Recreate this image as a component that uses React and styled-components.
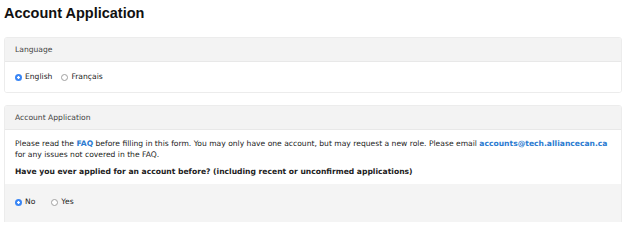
import React, { useState } from "react";
import styled, { createGlobalStyle } from "styled-components";

const GlobalStyle = createGlobalStyle`
  html, body {
    margin: 0;
    padding: 0;
    background: #ffffff;
  }
  body {
    font-family: "DejaVu Sans", Verdana, sans-serif;
    color: #222;
  }
`;

const Page = styled.div`
  width: 624px;
  height: 222px;
  overflow: hidden;
  padding: 0 2px 0 4px;
  box-sizing: border-box;
`;

const Title = styled.h1`
  margin: 0;
  padding-top: 5px;
  height: 37px;
  box-sizing: border-box;
  font-family: "Liberation Sans", Arial, sans-serif;
  font-weight: bold;
  font-size: 14.5px;
  line-height: 16px;
  color: #111;
`;

const Panel = styled.section`
  border: 1px solid #ececec;
  border-radius: 3px;
  margin-bottom: 12px;
  background: #fff;
  overflow: hidden;
`;

const PanelHeader = styled.div`
  background: #f3f3f3;
  border-bottom: 1px solid #e8e8e8;
  height: 24px;
  box-sizing: border-box;
  padding: 0 10px;
  display: flex;
  align-items: center;
  font-size: 7.6px;
  color: #444;
`;

const PanelBody = styled.div`
  padding: ${(p) => p.$pad || "10px"};
  background: ${(p) => (p.$shaded ? "#f4f4f4" : "#fff")};
  font-size: 7.6px;
  line-height: 10.5px;
  color: #222;
`;

const Paragraph = styled.p`
  margin: 0 0 ${(p) => p.$gap || 0}px;
  font-weight: ${(p) => (p.$bold ? "bold" : "normal")};
`;

const Link = styled.a`
  color: #2b7bd1;
  font-weight: bold;
  text-decoration: none;
`;

const RadioRow = styled.div`
  display: flex;
  align-items: center;
  height: 11px;
  gap: ${(p) => p.$gap || 10}px;
`;

const RadioLabel = styled.label`
  display: flex;
  align-items: center;
  gap: 3px;
  font-size: 7.6px;
  color: #222;
  cursor: pointer;
`;

const RadioInput = styled.input.attrs({ type: "radio" })`
  appearance: none;
  margin: 0;
  width: 7px;
  height: 7px;
  border-radius: 50%;
  border: 1px solid #a0a0a0;
  background: #fff;
  box-sizing: border-box;
  &:checked {
    border: none;
    background: radial-gradient(circle, #fff 0 1.1px, #3a86f5 1.5px);
  }
`;

const Radio = ({ name, value, checked, onChange, children }) => (
  <RadioLabel>
    <RadioInput name={name} value={value} checked={checked} onChange={() => onChange(value)} />
    {children}
  </RadioLabel>
);

export default function App() {
  const [lang, setLang] = useState("en");
  const [applied, setApplied] = useState("no");

  return (
    <Page>
      <GlobalStyle />
      <Title>Account Application</Title>

      <Panel>
        <PanelHeader>Language</PanelHeader>
        <PanelBody $pad="10px 10px 9px">
          <RadioRow $gap={9}>
            <Radio name="lang" value="en" checked={lang === "en"} onChange={setLang}>English</Radio>
            <Radio name="lang" value="fr" checked={lang === "fr"} onChange={setLang}>Français</Radio>
          </RadioRow>
        </PanelBody>
      </Panel>

      <Panel>
        <PanelHeader>Account Application</PanelHeader>
        <PanelBody $pad="9px 10px 6px">
          <Paragraph $gap={7}>
            Please read the <Link href="#">FAQ</Link> before filling in this form. You may only have one
            account, but may request a new role. Please email{" "}
            <Link href="#">accounts@tech.alliancecan.ca</Link> for any issues not covered in the FAQ.
          </Paragraph>
          <Paragraph $bold>
            Have you ever applied for an account before? (including recent or unconfirmed applications)
          </Paragraph>
        </PanelBody>
        <PanelBody $shaded $pad="13px 10px 16px">
          <RadioRow $gap={16}>
            <Radio name="applied" value="no" checked={applied === "no"} onChange={setApplied}>No</Radio>
            <Radio name="applied" value="yes" checked={applied === "yes"} onChange={setApplied}>Yes</Radio>
          </RadioRow>
        </PanelBody>
      </Panel>
    </Page>
  );
}
